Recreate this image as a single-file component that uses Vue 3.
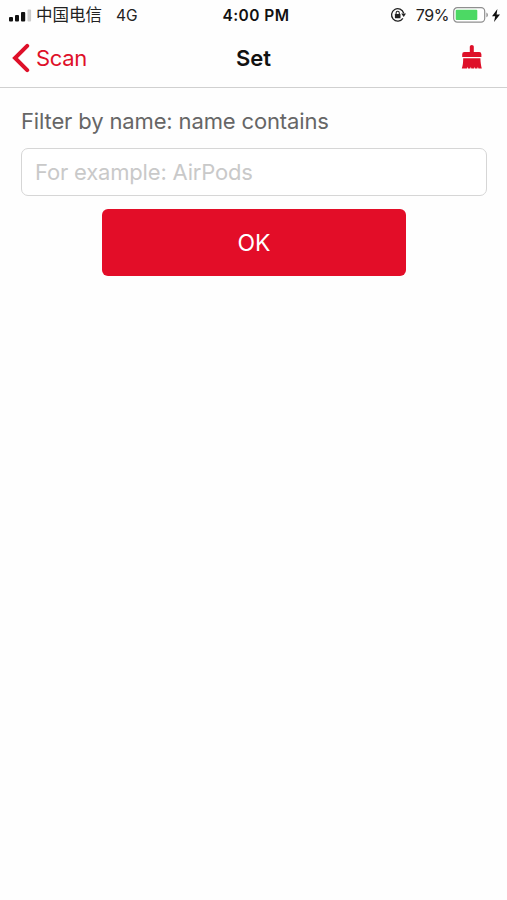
<script setup>
import { ref } from 'vue'

const filterName = ref('')
</script>

<template>
  <div class="screen">
    <div class="status">
      <div class="status-left">
        <svg class="signal" width="23" height="14" viewBox="0 0 23 14">
          <rect x="0" y="9" width="4" height="4.5" rx="1" fill="#111" />
          <rect x="6" y="7" width="4" height="6.5" rx="1" fill="#111" />
          <rect x="12" y="4" width="4.2" height="9.5" rx="1" fill="#111" />
          <rect x="18.5" y="1.5" width="3.6" height="12" rx="1" fill="#ccc" />
        </svg>
        <span class="carrier">中国电信</span>
        <span class="network">4G</span>
      </div>
      <span class="time">4:00 PM</span>
      <div class="status-right">
        <svg class="lock" width="17" height="16" viewBox="0 0 17 16">
          <path d="M12.9 11.4A6.2 6.2 0 1 1 13.7 6.2" fill="none" stroke="#222" stroke-width="1.3" />
          <path d="M11.2 6.5h4.8l-2.3 3.4z" fill="#222" />
          <rect x="4.9" y="7" width="5.6" height="4.3" rx=".6" fill="#222" />
          <path d="M6.1 7.2V5.9a1.6 1.6 0 0 1 3.2 0v1.3" fill="none" stroke="#222" stroke-width="1.1" />
        </svg>
        <span class="percent">79%</span>
        <svg class="battery" width="36" height="16" viewBox="0 0 36 16">
          <rect x=".7" y=".7" width="31" height="14.4" rx="3.6" fill="#fff" stroke="#8f8f8f" stroke-width="1.2" />
          <rect x="2.7" y="2.7" width="21.6" height="10.4" rx="1" fill="#4cd964" />
          <path d="M33.4 5.5c2 .8 2 4 0 4.8z" fill="#8f8f8f" />
        </svg>
        <svg class="bolt" width="8" height="13" viewBox="0 0 8 13">
          <path d="M5.4 0L0 7.2h3.2L2 13l6-7.6H4.6z" fill="#111" />
        </svg>
      </div>
    </div>

    <header class="nav">
      <button class="back">
        <svg width="18" height="30" viewBox="0 0 18 30">
          <path d="M15.2 2.8L3 15l12.2 12.2" fill="none" stroke="#de1029" stroke-width="4" stroke-linecap="round" />
        </svg>
        <span class="back-text">Scan</span>
      </button>
      <h1 class="title">Set</h1>
      <button class="clear" aria-label="Clear" @click="filterName = ''">
        <svg width="22" height="26" viewBox="0 0 22 26">
          <path
            d="M8.8 2.6Q8.8.9 10.8.9T12.8 2.6V8h5.4q2.2 0 2.2 2.2V12.9H1.2v-2.7Q1.2 8 3.4 8h5.4z"
            fill="#de1029"
          />
          <path
            d="M2.2 14.2h17.2c.1 4.2.6 7.2 1.4 10.4h-3.4l-.5-1.8-.5 1.8h-2.6l-.4-1.8-.5 1.8h-2.6l-.4-1.8-.6 1.8H6.9l-.2-1.8-.9 1.8H.8c1-3 1.4-6.2 1.4-10.4z"
            fill="#de1029"
          />
        </svg>
      </button>
    </header>

    <main class="content">
      <label class="label" for="filter-name">Filter by name: name contains</label>
      <input id="filter-name" v-model="filterName" class="input" type="text" placeholder="For example: AirPods">
      <button class="ok">OK</button>
    </main>
  </div>
</template>

<style>
body {
  background: #fefefe;
}
</style>

<style scoped>
.screen {
  min-height: 900px;
  background: #fefefe;
  font-family: Inter, "Noto Sans CJK SC", sans-serif;
  color: #111;
}

button {
  padding: 0;
  border: 0;
  background: none;
  font-family: inherit;
  cursor: pointer;
}

svg {
  display: block;
  flex: none;
}

.status {
  display: grid;
  grid-template-columns: 1fr auto 1fr;
  align-items: center;
  height: 30px;
  padding: 0 7px 0 9px;
  white-space: nowrap;
}

.status-left,
.status-right {
  display: flex;
  align-items: center;
}

.status-right {
  justify-content: flex-end;
}

.carrier {
  margin-left: 4px;
  font-size: 16.5px;
  line-height: 30px;
  color: #222;
}

.network {
  margin-left: 14px;
  font-size: 15.5px;
  color: #222;
}

.time {
  padding-left: 3px;
  font-size: 15.5px;
  font-weight: 600;
  letter-spacing: 0.45px;
}

.percent {
  margin-left: 9px;
  font-size: 16px;
  letter-spacing: -0.4px;
  color: #222;
}

.battery {
  margin-left: 4px;
}

.bolt {
  margin-left: 3px;
}

.nav {
  display: grid;
  grid-template-columns: 1fr auto 1fr;
  align-items: center;
  height: 57px;
  border-bottom: 1px solid #d0d0d0;
}

.back {
  display: flex;
  align-items: center;
  gap: 6px;
  justify-self: start;
  margin: 0 0 2px 12px;
}

.back-text {
  font-size: 22px;
  letter-spacing: -0.35px;
  color: #de1029;
}

.title {
  margin: 0 0 2px;
  font-size: 22px;
  font-weight: 600;
}

.clear {
  justify-self: end;
  margin: 0 24px 3px 0;
}

.content {
  display: flex;
  flex-direction: column;
  padding: 18px 20px 0 21px;
}

.label {
  font-size: 22px;
  line-height: 30px;
  letter-spacing: -0.14px;
  color: #666;
}

.input {
  box-sizing: border-box;
  width: 100%;
  height: 48px;
  margin-top: 12px;
  padding: 0 13px;
  border: 1px solid #d6d6d6;
  border-radius: 7px;
  outline: 0;
  background: #fff;
  font-family: inherit;
  font-size: 22px;
  letter-spacing: -0.18px;
  color: #333;
}

.input::placeholder {
  color: #c9c9c9;
  opacity: 1;
}

.ok {
  align-self: center;
  width: 304px;
  height: 67px;
  margin-top: 13px;
  padding-top: 1px;
  border-radius: 6px;
  background: #e30d28;
  font-size: 23px;
  color: #fff;
}
</style>
